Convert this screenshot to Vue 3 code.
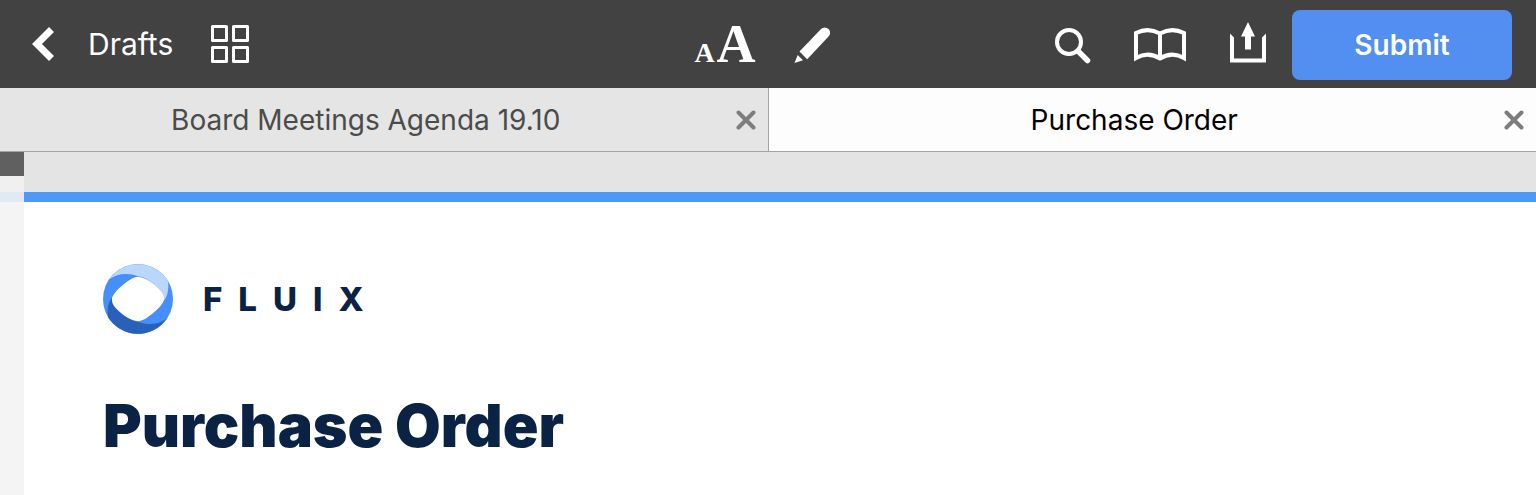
<template>
  <div class="app">
    <header class="toolbar">
      <div class="group left">
        <button class="icon-btn back" aria-label="Back">
          <svg width="22" height="34" viewBox="0 0 22 34">
            <path d="M19.500 2.500 5 17l14.500 14.500" fill="none" stroke="#fff" stroke-width="7" />
          </svg>
        </button>
        <a class="drafts" href="#drafts">Drafts</a>
        <button class="icon-btn" aria-label="Page thumbnails">
          <svg width="38" height="38" viewBox="0 0 38 38">
            <g fill="none" stroke="#fff" stroke-width="3" stroke-linejoin="round">
              <rect x="1.500" y="1.500" width="14" height="14" />
              <rect x="22.500" y="1.500" width="14" height="14" />
              <rect x="1.500" y="22.500" width="14" height="14" />
              <rect x="22.500" y="22.500" width="14" height="14" />
            </g>
          </svg>
        </button>
      </div>

      <div class="group center">
        <button class="font-size" aria-label="Text size">
          <span class="small">A</span><span class="big">A</span>
        </button>
        <button class="icon-btn" aria-label="Edit">
          <svg width="36" height="37" viewBox="0 0 36 37">
            <path
              d="M5.500 24.500 27 2.100a5.200 5.200 0 0 1 7.500 7.500L13.200 32.200z M3.700 28 9 33.200 0.500 36z"
              fill="#fff"
            />
          </svg>
        </button>
      </div>

      <div class="group right">
        <button class="icon-btn" aria-label="Search">
          <svg width="38" height="38" viewBox="0 0 38 38">
            <g fill="none" stroke="#fff">
              <circle cx="15" cy="16" r="12" stroke-width="4" />
              <path d="m24 25 9.500 9.500" stroke-width="5.500" stroke-linecap="round" />
            </g>
          </svg>
        </button>
        <button class="icon-btn book" aria-label="Bookmarks">
          <svg width="52" height="34" viewBox="0 0 52 34">
            <path
              d="M2 30V5Q14-1 26 5.500 38-1 50 5v25Q38 23 26 30.500 14 23 2 30zM26 5v26"
              fill="none"
              stroke="#fff"
              stroke-width="4"
            />
          </svg>
        </button>
        <button class="icon-btn share" aria-label="Share">
          <svg width="36" height="46" viewBox="0 0 36 46">
            <path d="M0 11.500 4 15.500V36.500H32V15.500L36 11.500V40.500H0z" fill="#fff" />
            <path d="M18 0 25 14.500H21V27.500H15V14.500H11z" fill="#fff" />
          </svg>
        </button>
        <button class="submit">Submit</button>
      </div>
    </header>

    <nav class="tabs">
      <div
        v-for="tab in tabs"
        :key="tab.id"
        class="tab"
        :class="{ active: tab.id === activeTab }"
      >
        <button class="title" @click="activeTab = tab.id">{{ tab.title }}</button>
        <button class="close" :aria-label="`Close ${tab.title}`">
          <svg width="20" height="20" viewBox="0 0 20 20">
            <path
              d="m2.500 2.500 15 15m0-15-15 15"
              stroke="#7d7d7d"
              stroke-width="4"
              stroke-linecap="round"
            />
          </svg>
        </button>
      </div>
    </nav>

    <main class="workspace">
      <aside class="rail">
        <button class="handle" aria-label="Open sidebar"></button>
        <div class="rail-gap"></div>
        <div class="rail-line"></div>
      </aside>
      <article class="page">
        <div class="brand">
          <svg width="70" height="70" viewBox="0 0 210 210">
            <circle cx="105" cy="105" r="105" fill="#468ef9" />
            <path :d="swoosh" fill="#bad6fc" />
            <path :d="swoosh" fill="#2960b9" transform="rotate(180 105 105)" />
            <path
              d="M105 38C125 40 146 53 165 71C180 85 184 95 183 107C180 119 168 132 154 144C136 160 121 170 105 172C85 170 64 157 45 139C30 125 26 115 27 103C30 91 42 78 56 66C74 50 89 40 105 38z"
              fill="#fff"
            />
          </svg>
          <div class="wordmark">
            <span v-for="letter in brand" :key="letter">{{ letter }}</span>
          </div>
        </div>
        <h1>Purchase Order</h1>
      </article>
    </main>
  </div>
</template>

<script setup>
import { ref } from "vue";

const brand = "FLUIX";
const tabs = ref([
  { id: 1, title: "Board Meetings Agenda 19.10" },
  { id: 2, title: "Purchase Order" },
]);
const activeTab = ref(2);

// one ribbon of the logo ring, the other one is the same turned by 180deg
const swoosh =
  "M19 46A105 105 0 0 1 195 51C198 72 194 98 183 109C184 96 180 85 165 71C146 53 125 39 105 37C74 25 42 29 19 46z";
</script>

<style>
body {
  margin: 0;
}
</style>

<style scoped>
.app {
  display: flex;
  flex-direction: column;
  min-height: 100vh;
  background: #e4e4e4;
  font-family: Inter, "Liberation Sans", sans-serif;
}

button {
  padding: 0;
  border: 0;
  background: none;
  color: inherit;
  font: inherit;
  cursor: pointer;
}

svg {
  display: block;
}

.toolbar {
  display: grid;
  grid-template-columns: 1fr auto 1fr;
  align-items: center;
  height: 88px;
  padding: 0 24px;
  box-sizing: border-box;
  background: #424242;
  color: #fff;
}

.group {
  display: flex;
  align-items: center;
}

.left {
  padding-left: 8px;
}

.drafts {
  margin: 0 38px 0 34px;
  color: #fff;
  font-size: 30px;
  text-decoration: none;
}

.center {
  gap: 38px;
  padding: 2px 12px 0 0;
}

.font-size {
  display: flex;
  align-items: baseline;
  gap: 2px;
  padding-top: 6px;
  font-family: "Liberation Serif", serif;
  font-weight: 700;
  line-height: 60px;
}

.small {
  font-size: 28px;
}

.big {
  font-size: 54px;
}

.right {
  justify-content: flex-end;
  padding-top: 2px;
}

.book {
  margin: 0 44px 0 42px;
}

.share {
  margin-right: 26px;
}

.submit {
  width: 220px;
  height: 70px;
  border-radius: 8px;
  background: #528ff0;
  font-size: 28px;
  font-weight: 600;
}

.tabs {
  display: flex;
  height: 63px;
  border-bottom: 1px solid #a5a5a5;
}

.tab {
  display: flex;
  flex: 1;
  padding-right: 8px;
  background: #e5e5e5;
  color: #4b4b4b;
  font-size: 28px;
}

.tab + .tab {
  border-left: 1px solid #a5a5a5;
}

.tab.active {
  background: #fdfdfd;
  color: #000;
}

.title {
  flex: 1;
}

.close {
  display: flex;
  align-items: center;
  justify-content: center;
  width: 28px;
}

.workspace {
  display: flex;
  flex: 1;
}

.rail {
  display: flex;
  flex-direction: column;
  width: 24px;
  background: #f4f4f4;
}

.handle {
  height: 24px;
  background: #606060;
}

.rail-gap {
  height: 16px;
  background: #f0f0f0;
}

.rail-line {
  height: 10px;
  background: #e0e9f4;
}

.page {
  flex: 1;
  margin-top: 40px;
  padding: 62px 79px 32px;
  border-top: 10px solid #4f98f8;
  background: #fff;
  color: #0a2244;
}

.brand {
  display: flex;
  align-items: center;
  gap: 30px;
}

.wordmark {
  display: flex;
  gap: 16px;
  font-size: 33px;
  font-weight: 800;
}

h1 {
  margin: 58px 0 0;
  font-size: 59px;
  font-weight: 900;
  line-height: 68px;
}
</style>
